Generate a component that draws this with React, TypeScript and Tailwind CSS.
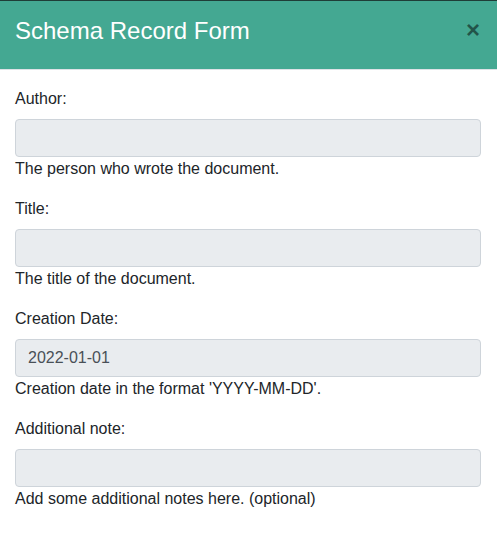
import React from "react";

const fields = [
  { label: "Author:", value: "", help: "The person who wrote the document." },
  { label: "Title:", value: "", help: "The title of the document." },
  { label: "Creation Date:", value: "2022-01-01", help: "Creation date in the format 'YYYY-MM-DD'." },
  { label: "Additional note:", value: "", help: "Add some additional notes here. (optional)" },
];

export default function App() {
  return (
    <div
      className="w-[497px] h-[542px] bg-white overflow-hidden text-[#212529]"
      style={{ fontFamily: '"Liberation Sans", Arial, sans-serif' }}
    >
      <div className="h-px bg-[#1f3d37]" />
      <div className="flex items-start justify-between bg-[#44a892] border-b border-[#dee2e6] pl-[15px] pr-[16px] pt-[15px] pb-[16px]">
        <h4 className="text-[24px] leading-[29px] text-white font-normal mb-2">Schema Record Form</h4>
        <button className="text-[24px] leading-[29px] font-bold text-black/50 mr-[1px] -mt-[1px]">×</button>
      </div>
      <div className="pl-[15px] pr-[16px] pt-[17px] flex flex-col gap-[16px]">
        {fields.map((f) => (
          <div key={f.label} className="flex flex-col">
            <label className="text-[16px] leading-[24px] mb-2">{f.label}</label>
            <input
              readOnly
              value={f.value}
              className="h-[38px] w-full rounded-[4px] border border-[#ced4da] bg-[#e9ecef] px-3 text-[16px] text-[#495057] outline-none"
              style={{ fontFamily: '"Liberation Sans", Arial, sans-serif' }}
            />
            <div className="text-[16px] leading-[24px]">{f.help}</div>
          </div>
        ))}
      </div>
    </div>
  );
}
